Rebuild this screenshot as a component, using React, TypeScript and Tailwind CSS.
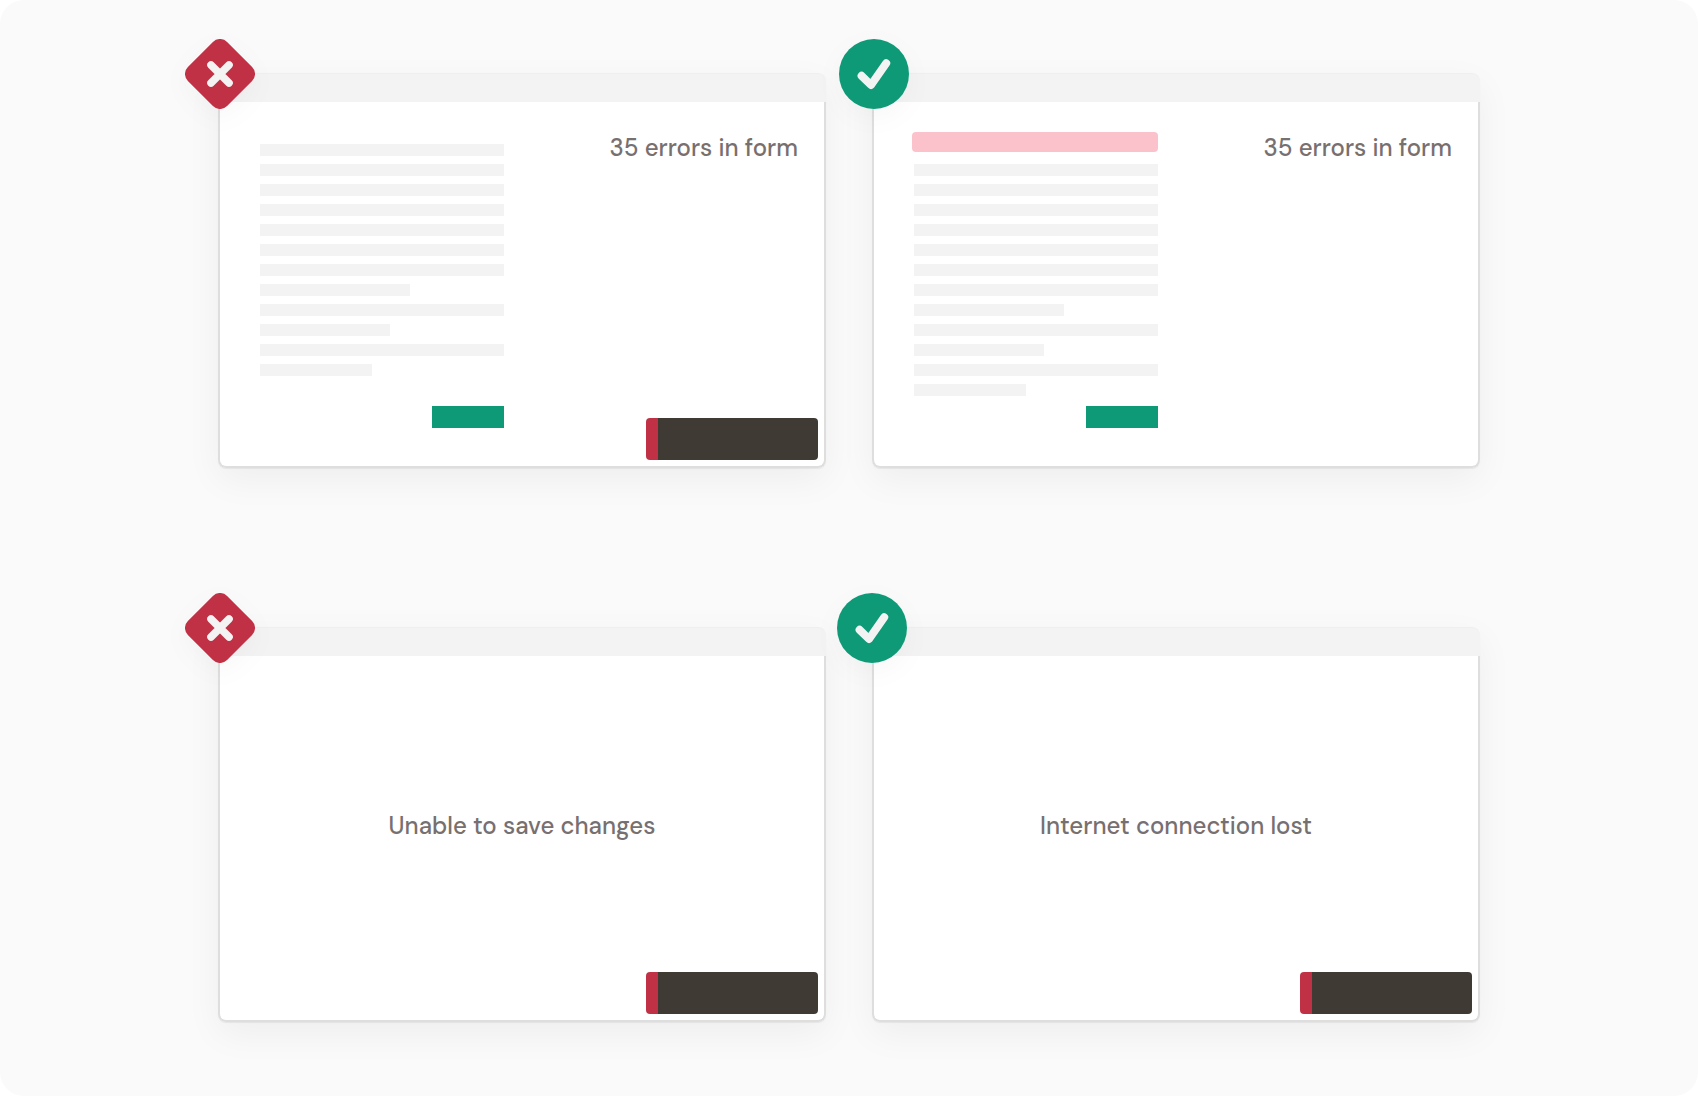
import React from 'react';
import clsx from 'clsx';

interface ExampleCardProps {
  variant: 'dont' | 'do';
  badgeClassName?: string;
  children: React.ReactNode;
}

const DontIcon: React.FC = () => (
  <svg viewBox="0 0 70 70" className="size-full" role="img" aria-label="Don't">
    <rect x="7.3" y="7.3" width="55.4" height="55.4" rx="10" fill="#c03146" transform="rotate(45 35 35)" />
    <path d="M26 26 L44 44 M44 26 L26 44" stroke="#f3f3f3" strokeWidth="7.6" strokeLinecap="round" />
  </svg>
);

const DoIcon: React.FC = () => (
  <svg viewBox="0 0 70 70" className="size-full" role="img" aria-label="Do">
    <circle cx="35" cy="35" r="35" fill="#0e9a77" />
    <path
      d="M22.6 36.8 L32 46 L47.2 24.2"
      fill="none"
      stroke="#f3f3f3"
      strokeWidth="8"
      strokeLinecap="round"
      strokeLinejoin="round"
    />
  </svg>
);

const ExampleCard: React.FC<ExampleCardProps> = ({ variant, badgeClassName = '-left-[33px]', children }) => (
  <section className="relative flex flex-col rounded-lg shadow-[0_1px_1px_rgba(0,0,0,0.06),0_12px_36px_rgba(0,0,0,0.05)]">
    <header className="h-[29px] rounded-t-lg border-t border-[#efefef] bg-[#f3f3f3]" />
    <div className="relative flex h-[366px] flex-col rounded-b-lg border-x-2 border-b-2 border-[#dedede] bg-white">
      {children}
    </div>
    <div
      className={clsx(
        'absolute -top-[34px] size-[70px] drop-shadow-[0_8px_12px_rgba(0,0,0,0.03)]',
        badgeClassName,
      )}
    >
      {variant === 'do' ? <DoIcon /> : <DontIcon />}
    </div>
  </section>
);

const lineWidths = [
  'w-full',
  'w-full',
  'w-full',
  'w-full',
  'w-full',
  'w-full',
  'w-full',
  'w-[150px]',
  'w-full',
  'w-[130px]',
  'w-full',
  'w-[112px]',
];

const FormExample: React.FC<{ banner?: boolean }> = ({ banner }) => (
  <div className="flex flex-1 items-start justify-between pr-[26px] pl-10">
    <form className={clsx('flex h-[326px] w-[244px] flex-col', banner ? 'pt-[30px]' : 'pt-[42px]')}>
      {banner && <div className="mb-3 -ml-0.5 h-5 shrink-0 rounded bg-[#fbc2cc]" />}
      <div className="flex flex-col gap-2">
        {lineWidths.map((width, i) => (
          <div key={i} className={clsx('h-3 bg-[#f3f3f3]', width)} />
        ))}
      </div>
      <button type="button" aria-label="Submit" className="mt-auto h-[22px] w-[72px] shrink-0 self-end bg-[#0e9a77]" />
    </form>
    <p className="pt-[30px] text-2xl font-medium">35 errors in form</p>
  </div>
);

const MessageExample: React.FC<{ message: string }> = ({ message }) => (
  <div className="flex flex-1 items-center justify-center pb-6">
    <p className="text-2xl font-medium">{message}</p>
  </div>
);

const Toast: React.FC = () => (
  <div className="absolute right-1.5 bottom-1.5 h-[42px] w-[172px] rounded border-l-12 border-[#c03146] bg-[#3f3a33]" />
);

export default function App() {
  return (
    <main className="flex min-h-screen justify-center rounded-3xl bg-[#fafafa] px-12 py-[73px] font-['DM_Sans','Inter',sans-serif] text-[#777070]">
      <div className="grid w-full max-w-[1262px] grid-cols-2 content-start gap-x-[46px] gap-y-[159px]">
        <ExampleCard variant="dont">
          <FormExample />
          <Toast />
        </ExampleCard>
        <ExampleCard variant="do">
          <FormExample banner />
        </ExampleCard>
        <ExampleCard variant="dont">
          <MessageExample message="Unable to save changes" />
          <Toast />
        </ExampleCard>
        <ExampleCard variant="do" badgeClassName="-left-[35px]">
          <MessageExample message="Internet connection lost" />
          <Toast />
        </ExampleCard>
      </div>
    </main>
  );
}
